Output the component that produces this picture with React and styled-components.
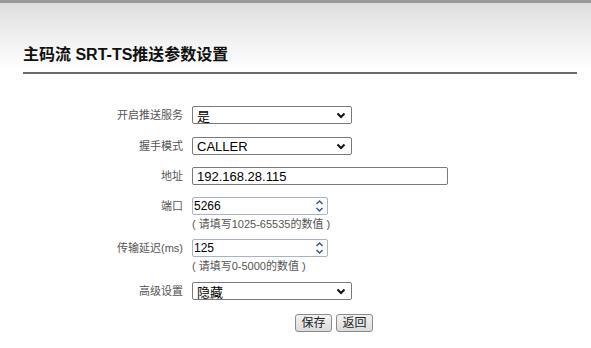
import React from "react";
import styled, { createGlobalStyle } from "styled-components";

const GlobalStyle = createGlobalStyle`
  html, body {
    margin: 0;
    padding: 0;
    background: #fff;
  }
  body {
    font-family: "Liberation Sans", "Noto Sans CJK SC", sans-serif;
    width: 591px;
    height: 348px;
    overflow: hidden;
  }
`;

const Chevron = () => (
  <svg width="10" height="7" viewBox="0 0 10 7">
    <path d="M1.5 1.5 L5 5 L8.5 1.5" fill="none" stroke="#111" strokeWidth="2" />
  </svg>
);

const SpinIcon = () => (
  <svg width="9" height="14" viewBox="0 0 9 14">
    <path d="M1.5 5 L4.5 2 L7.5 5" fill="none" stroke="#3a5a8c" strokeWidth="1.5" />
    <path d="M1.5 9 L4.5 12 L7.5 9" fill="none" stroke="#3a5a8c" strokeWidth="1.5" />
  </svg>
);

const rows = [
  { label: "开启推送服务", type: "select", value: "是", gap: 13 },
  { label: "握手模式", type: "select", value: "CALLER", gap: 12 },
  { label: "地址", type: "text", value: "192.168.28.115", gap: 12 },
  { label: "端口", type: "number", value: "5266", hint: "( 请填写1025-65535的数值 )", gap: 8 },
  { label: "传输延迟(ms)", type: "number", value: "125", hint: "( 请填写0-5000的数值 )", gap: 9 },
  { label: "高级设置", type: "select", value: "隐藏", gap: 14 },
];

export default function App() {
  return (
    <Page>
      <GlobalStyle />
      <Header>
        <Title>主码流 SRT-TS推送参数设置</Title>
      </Header>
      <Form>
        {rows.map((r) => (
          <Row key={r.label} $gap={r.gap}>
            <Label>{r.label}</Label>
            <Field>
              {r.type === "select" && (
                <Select>
                  <span>{r.value}</span>
                  <Chevron />
                </Select>
              )}
              {r.type === "text" && <TextBox>{r.value}</TextBox>}
              {r.type === "number" && (
                <NumberBox>
                  <span>{r.value}</span>
                  <SpinIcon />
                </NumberBox>
              )}
              {r.hint && <Hint>{r.hint}</Hint>}
            </Field>
          </Row>
        ))}
        <Buttons>
          <Button>保存</Button>
          <Button>返回</Button>
        </Buttons>
      </Form>
    </Page>
  );
}

const Page = styled.div`
  width: 591px;
  height: 348px;
  background: #fff;
`;

const Header = styled.div`
  height: 70px;
  padding: 0 14px 0 23px;
  border-top: 3px solid #9a9a9a;
  background: linear-gradient(to bottom, #dedede 0%, #f3f3f3 60%, #fff 100%);
  display: flex;
  align-items: flex-end;
  box-sizing: border-box;
`;

const Title = styled.h1`
  flex: 1;
  margin: 0;
  padding-bottom: 7px;
  font-size: 16px;
  font-weight: bold;
  line-height: 20px;
  color: #111;
  border-bottom: 2px solid #6a6a6a;
  margin-bottom: -2px;
  position: relative;
  top: 2px;
`;

const Form = styled.div`
  padding-top: 36px;
  display: flex;
  flex-direction: column;
`;

const Row = styled.div`
  display: flex;
  align-items: flex-start;
  margin-bottom: ${(p) => p.$gap}px;
`;

const Label = styled.div`
  width: 192px;
  padding-right: 9px;
  box-sizing: border-box;
  text-align: right;
  font-size: 11px;
  line-height: 18px;
  color: #555;
`;

const Field = styled.div`
  display: flex;
  flex-direction: column;
`;

const Box = styled.div`
  height: 18px;
  box-sizing: border-box;
  border: 1px solid #7a7a7a;
  border-radius: 2px;
  background: #fff;
  font-size: 13px;
  color: #000;
  display: flex;
  align-items: center;
  justify-content: space-between;
`;

const Select = styled(Box)`
  width: 160px;
  padding: 0 5px 0 4px;
`;

const TextBox = styled(Box)`
  width: 256px;
  padding: 0 4px;
`;

const NumberBox = styled(Box)`
  width: 136px;
  padding: 0 3px 0 1px;
  border-color: #a9b3c2;
  font-size: 12px;
`;

const Hint = styled.div`
  margin-top: 2px;
  font-size: 11px;
  line-height: 14px;
  color: #555;
`;

const Buttons = styled.div`
  display: flex;
  gap: 4px;
  padding-left: 295px;
`;

const Button = styled.button`
  width: 37px;
  height: 18px;
  padding: 0;
  font-family: "Liberation Sans", "Noto Sans CJK SC", sans-serif;
  font-size: 12px;
  line-height: 16px;
  color: #222;
  background: linear-gradient(to bottom, #f2f2f2, #dcdcdc);
  border: 1px solid #8a8a8a;
  border-radius: 3px;
`;
